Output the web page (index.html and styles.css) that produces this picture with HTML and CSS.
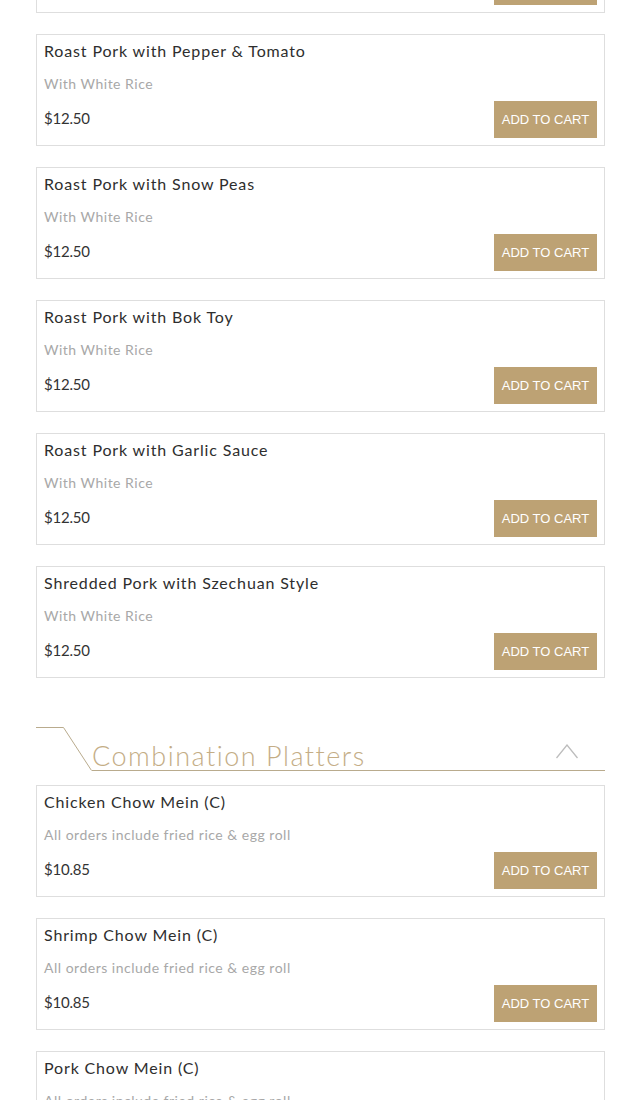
FILE: index.html
```html
<!DOCTYPE html>
<html lang="en">
<head>
  <meta charset="UTF-8">
  <meta name="viewport" content="width=device-width, initial-scale=1.0">
  <title>Menu</title>
  <link rel="stylesheet" href="styles.css">
</head>
<body>

  <div class="menu">

    <div class="menu-list first">
      <div class="item">
        <div class="item-name">Roast Pork with Broccoli</div>
        <div class="item-desc">With White Rice</div>
        <div class="item-row">
          <span class="price">$12.50</span>
          <a class="cart-btn" href="#">ADD TO CART</a>
        </div>
      </div>
      <div class="item">
        <div class="item-name">Roast Pork with Pepper &amp; Tomato</div>
        <div class="item-desc">With White Rice</div>
        <div class="item-row">
          <span class="price">$12.50</span>
          <a class="cart-btn" href="#">ADD TO CART</a>
        </div>
      </div>
      <div class="item">
        <div class="item-name">Roast Pork with Snow Peas</div>
        <div class="item-desc">With White Rice</div>
        <div class="item-row">
          <span class="price">$12.50</span>
          <a class="cart-btn" href="#">ADD TO CART</a>
        </div>
      </div>
      <div class="item">
        <div class="item-name">Roast Pork with Bok Toy</div>
        <div class="item-desc">With White Rice</div>
        <div class="item-row">
          <span class="price">$12.50</span>
          <a class="cart-btn" href="#">ADD TO CART</a>
        </div>
      </div>
      <div class="item">
        <div class="item-name">Roast Pork with Garlic Sauce</div>
        <div class="item-desc">With White Rice</div>
        <div class="item-row">
          <span class="price">$12.50</span>
          <a class="cart-btn" href="#">ADD TO CART</a>
        </div>
      </div>
      <div class="item">
        <div class="item-name">Shredded Pork with Szechuan Style</div>
        <div class="item-desc">With White Rice</div>
        <div class="item-row">
          <span class="price">$12.50</span>
          <a class="cart-btn" href="#">ADD TO CART</a>
        </div>
      </div>
    </div>

    <div class="section-head">
      <svg class="head-corner" width="56" height="44" viewBox="0 0 56 44">
        <polyline points="0,0.5 27.5,0.5 55.5,43.5" fill="none" stroke="#b9ab8d" stroke-width="1"/>
      </svg>
      <div class="section-title">
        <h2>Combination Platters</h2>
        <svg class="chevron" width="22" height="15" viewBox="0 0 22 15">
          <polyline points="0.5,14 11,1 21.5,14" fill="none" stroke="#bdbdbd" stroke-width="1.3"/>
        </svg>
      </div>
    </div>

    <div class="menu-list">
      <div class="item">
        <div class="item-name">Chicken Chow Mein (C)</div>
        <div class="item-desc">All orders include fried rice &amp; egg roll</div>
        <div class="item-row">
          <span class="price">$10.85</span>
          <a class="cart-btn" href="#">ADD TO CART</a>
        </div>
      </div>
      <div class="item">
        <div class="item-name">Shrimp Chow Mein (C)</div>
        <div class="item-desc">All orders include fried rice &amp; egg roll</div>
        <div class="item-row">
          <span class="price">$10.85</span>
          <a class="cart-btn" href="#">ADD TO CART</a>
        </div>
      </div>
      <div class="item">
        <div class="item-name">Pork Chow Mein (C)</div>
        <div class="item-desc">All orders include fried rice &amp; egg roll</div>
        <div class="item-row">
          <span class="price">$10.85</span>
          <a class="cart-btn" href="#">ADD TO CART</a>
        </div>
      </div>
    </div>

  </div>

</body>
</html>
```

FILE: styles.css
```css
body {
    margin: 0;
    background-color: #fff;
    font-family: "Lato", "Noto Sans", sans-serif;
    color: #333;
    overflow: hidden;
}

.menu {
    padding: 0 30px 0 36px;
}

.menu-list {
    display: flex;
    flex-direction: column;
    gap: 21px;
}

.menu-list.first {
    margin-top: -99px;
}

.item {
    border: 1px solid #dedede;
    padding: 6px 7px 7px 7px;
}

.item-name {
    font-size: 16px;
    line-height: 20px;
    letter-spacing: 0.85px;
    color: #2e2e2e;
}

.item-desc {
    margin-top: 13px;
    font-size: 14px;
    line-height: 20px;
    letter-spacing: 0.5px;
    color: #a8a8a8;
}

.item-row {
    margin-top: 7px;
    display: flex;
    justify-content: space-between;
    align-items: center;
}

.price {
    font-size: 15px;
    letter-spacing: -0.2px;
    color: #333;
    margin-top: -3px;
}

.cart-btn {
    background-color: #bda274;
    color: #fff;
    font-family: "Liberation Sans", Arial, sans-serif;
    font-size: 13px;
    text-decoration: none;
    height: 37px;
    width: 103px;
    display: flex;
    align-items: center;
    justify-content: center;
}

/* section header */
.section-head {
    display: flex;
    margin: 49px 0 14px 0;
    height: 44px;
}

.head-corner {
    flex: none;
    display: block;
}

.section-title {
    flex: 1;
    display: flex;
    justify-content: space-between;
    align-items: flex-end;
    border-bottom: 1px solid #b9ab8d;
}

.section-title h2 {
    margin: 0;
    font-size: 27px;
    font-weight: 300;
    letter-spacing: 1.5px;
    line-height: 32px;
    color: #c4ad86;
    padding-bottom: 0;
    margin-bottom: -2px;
}

.chevron {
    margin: 0 27px 11px 0;
    display: block;
}
```
